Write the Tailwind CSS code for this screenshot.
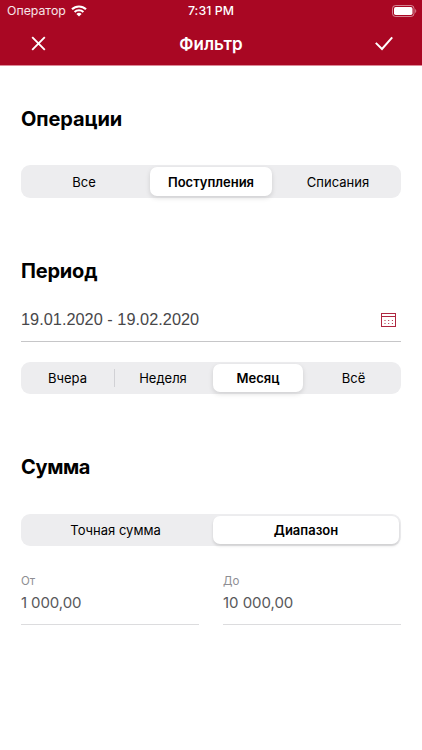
<!DOCTYPE html>
<html lang="ru">
<head>
    <meta charset="UTF-8" />
    <meta name="viewport" content="width=device-width, initial-scale=1.0" />
    <title>Фильтр</title>
    <script src="https://cdn.jsdelivr.net/npm/@tailwindcss/browser@4"></script>
</head>
<body class="bg-white text-black font-['Inter',sans-serif]">
<header class="h-[66px] bg-[#a90723] text-white border-b border-[#dc8a98]">
    <!-- Status bar -->
    <div class="h-[22px] grid grid-cols-3 items-center pl-[7px] pr-[7px] text-[12.3px] leading-[22px]">
        <div class="flex items-center gap-[5px]">
            <span class="text-white/90">Оператор</span>
            <svg class="w-[16px] h-[12px]" viewBox="0 0 16 12" fill="none" stroke="currentColor" stroke-width="2.1">
                <path d="M1 4.3a10 10 0 0 1 14 0" />
                <path d="M3.6 7a6.3 6.3 0 0 1 8.8 0" />
                <path d="M8 11.6 5.4 9a3.7 3.7 0 0 1 5.2 0z" fill="currentColor" stroke="none" />
            </svg>
        </div>
        <span class="text-center font-medium tracking-[0.1px]">7:31 PM</span>
        <svg class="w-[25px] h-[12px] justify-self-end -mr-[2px]" viewBox="0 0 25 12" fill="none">
            <rect x=".5" y=".5" width="21.5" height="11" rx="3" stroke="#fff" stroke-opacity=".5" />
            <rect x="2" y="2" width="18.5" height="8" rx="1.7" fill="#fff" />
            <path d="M23.2 4v4c1.4-.6 1.4-3.4 0-4z" fill="#fff" fill-opacity=".5" />
        </svg>
    </div>
    <!-- Navigation bar -->
    <div class="h-[43px] grid grid-cols-3 items-center pl-[31px] pr-[31px]">
        <svg class="w-[15px] h-[15px]" viewBox="0 0 15 15" fill="none" stroke="currentColor" stroke-width="1.9">
            <path d="M1.2 1.2l12.6 12.6M13.8 1.2 1.2 13.8" />
        </svg>
        <h1 class="text-center text-[17px] leading-[22px] font-semibold">Фильтр</h1>
        <svg class="w-[18px] h-[15px] justify-self-end -mr-[2px]" viewBox="0 0 18 15" fill="none" stroke="currentColor" stroke-width="2">
            <path d="M.8 6.9 7 13 17.2 1.3" />
        </svg>
    </div>
</header>

<main class="px-[21px]">
    <section class="pt-[39px]">
        <h2 class="text-[20px] leading-7 font-bold tracking-[-0.1px]">Операции</h2>
        <div class="mt-[32px] h-[33px] p-[2px] flex rounded-[9px] bg-[#ededef] text-[13px] text-center leading-[30px]">
            <div class="w-[127px] pr-[5px]">Все</div>
            <div class="w-[122px] h-[29px] rounded-[7px] bg-white font-semibold shadow-[0_2px_5px_rgba(0,0,0,0.13)]">Поступления</div>
            <div class="flex-1 pl-[5px]">Списания</div>
        </div>
    </section>

    <section class="pt-[59px]">
        <h2 class="text-[20px] leading-7 font-bold tracking-[-0.2px]">Период</h2>
        <div class="mt-[13px] h-[44px] pr-[5px] flex items-center justify-between border-b border-[#c6c6c8] font-['Liberation_Sans',sans-serif]">
            <span class="text-[16.3px] tracking-[0.03px] text-[#48484a]">19.01.2020 - 19.02.2020</span>
            <svg class="w-[15px] h-[14px]" viewBox="0 0 15 14" fill="none" stroke="#ae2640">
                <rect x=".5" y=".5" width="14" height="13" />
                <path d="M1 3.5h13" />
                <path d="M3.5 7.5h9M3.5 10.5h9" stroke-dasharray="1 2.7" />
            </svg>
        </div>
        <div class="mt-[20px] h-[32px] p-[2px] flex items-center rounded-[9px] bg-[#ededef] text-[13px] text-center leading-[28px]">
            <div class="w-[91px] pr-[2px]">Вчера</div>
            <div class="w-px h-[18px] bg-[#d1d1d5]"></div>
            <div class="w-[98px] pr-[2px]">Неделя</div>
            <div class="w-[90px] rounded-[7px] bg-white font-semibold shadow-[0_2px_5px_rgba(0,0,0,0.13)]">Месяц</div>
            <div class="flex-1 pl-[5px]">Всё</div>
        </div>
    </section>

    <section class="pt-[59px]">
        <h2 class="text-[20px] leading-7 font-bold tracking-[-0.4px]">Сумма</h2>
        <div class="mt-[33px] h-[32px] p-[2px] flex rounded-[9px] bg-[#ededef] text-[13px] text-center leading-[29px]">
            <div class="w-[190px] pr-[5px]">Точная сумма</div>
            <div class="flex-1 h-[28px] rounded-[7px] bg-white font-semibold shadow-[0_2px_3px_rgba(0,0,0,0.13)]">Диапазон</div>
        </div>
        <div class="mt-[25px] grid grid-cols-2 gap-[24px]">
            <div class="h-[54px] border-b border-[#dcdcde]">
                <div class="pt-[2px] text-[11.5px] leading-[16px] text-[#8e8e93]">От</div>
                <div class="mt-[3px] text-[15px] leading-[22px] tracking-[-0.1px] text-[#58585a]">1 000,00</div>
            </div>
            <div class="h-[54px] border-b border-[#dcdcde]">
                <div class="pt-[2px] text-[11.5px] leading-[16px] text-[#8e8e93]">До</div>
                <div class="mt-[3px] text-[15px] leading-[22px] tracking-[-0.05px] text-[#58585a]">10 000,00</div>
            </div>
        </div>
    </section>
</main>
</body>
</html>
